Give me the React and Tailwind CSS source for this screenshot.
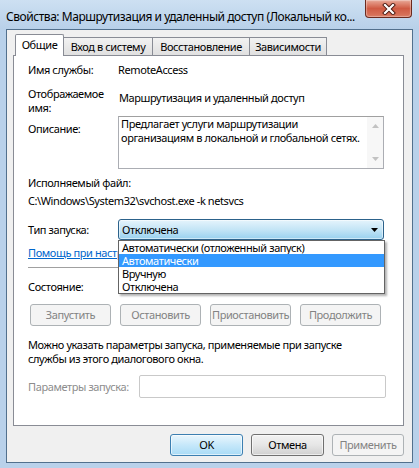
export default function App() {
  return (
    <div className="w-[419px] h-[468px] bg-[#b9d1ea] flex flex-col font-['Noto_Sans',sans-serif] text-[11px] leading-[14px] text-black tracking-[-0.4px] overflow-hidden">
      {/* title bar */}
      <div className="h-[29px] shrink-0 relative bg-gradient-to-b from-[#cde0f2] to-[#b8d0e9]">
        <div className="pl-[6px] pt-[10px] text-[12px] leading-[14px] tracking-[-0.45px] whitespace-nowrap">
          Свойства: Маршрутизация и удаленный доступ (Локальный ко...
        </div>
        <div className="absolute top-0 right-[7px] w-[47px] h-[18px] rounded-b-[4px] border border-t-0 border-[#6b2a1e] bg-gradient-to-b from-[#e8a897] via-[#cf5a43] to-[#d9785f] flex items-center justify-center shadow-[inset_0_0_1px_1px_rgba(255,255,255,0.35)]">
          <svg width="14" height="12" viewBox="0 0 14 12">
            <path d="M3 2 L11 10 M11 2 L3 10" stroke="#4a1810" strokeWidth="4" strokeLinecap="square" />
            <path d="M3 2 L11 10 M11 2 L3 10" stroke="#ffffff" strokeWidth="2.2" strokeLinecap="square" />
          </svg>
        </div>
      </div>

      {/* client area */}
      <div className="ml-[6px] w-[407px] h-[434px] shrink-0 border border-[#52708d] bg-[#f0f0f0] flex flex-col pl-[6px]">
        {/* tabs */}
        <div className="flex items-end h-[22px] mt-[4px] -mb-[1px] pl-[2px] relative z-10">
          <div className="w-[49px] h-[22px] bg-white border border-b-0 border-[#898c95] rounded-t-[2px] flex items-center justify-center pb-[1px]">
            Общие
          </div>
          <div className="w-[90px] h-[18px] mb-[1px] -ml-[1px] border border-b-0 border-[#898c95] bg-gradient-to-b from-[#f2f2f2] to-[#e0e0e0] flex items-center justify-center">
            Вход в систему
          </div>
          <div className="w-[98px] h-[18px] mb-[1px] -ml-[1px] border border-b-0 border-[#898c95] bg-gradient-to-b from-[#f2f2f2] to-[#e0e0e0] flex items-center justify-center">
            Восстановление
          </div>
          <div className="w-[78px] h-[18px] mb-[1px] -ml-[1px] border border-b-0 border-[#898c95] bg-gradient-to-b from-[#f2f2f2] to-[#e0e0e0] flex items-center justify-center">
            Зависимости
          </div>
        </div>

        {/* panel */}
        <div className="w-[391px] h-[371px] shrink-0 border border-[#898c95] bg-white pl-[14px] flex flex-col">
          <div className="flex mt-[7px] h-[14px]">
            <div className="w-[90px]">Имя службы:</div>
            <div>RemoteAccess</div>
          </div>

          <div className="flex mt-[10px] h-[28px]">
            <div className="w-[90px]">Отображаемое<br />имя:</div>
            <div className="pt-[4px] pl-[1px]">Маршрутизация и удаленный доступ</div>
          </div>

          <div className="flex mt-[1px] h-[53px]">
            <div className="w-[90px] pt-[6px]">Описание:</div>
            <div className="w-[266px] h-[53px] border border-[#abadb3] border-t-[#a0a0a0] flex">
              <div className="flex-1 pl-[2px] whitespace-nowrap">
                Предлагает услуги маршрутизации<br />организациям в локальной и глобальной сетях.
              </div>
              <div className="w-[16px] bg-[#f7f7f7] flex flex-col items-center justify-between py-[7px]">
                <svg width="7" height="4" viewBox="0 0 7 4"><path d="M0 4 L3.5 0 L7 4 Z" fill="#c2c2c2" /></svg>
                <svg width="7" height="4" viewBox="0 0 7 4"><path d="M0 0 L3.5 4 L7 0 Z" fill="#c2c2c2" /></svg>
              </div>
            </div>
          </div>

          <div className="mt-[7px] h-[14px]">Исполняемый файл:</div>
          <div className="mt-[4px] h-[14px] whitespace-nowrap">C:\Windows\System32\svchost.exe -k netsvcs</div>

          <div className="flex items-center mt-[11px] h-[21px] relative z-20">
            <div className="w-[90px]">Тип запуска:</div>
            <div className="w-[266px] h-[21px] rounded-[3px] border border-[#2c628b] bg-gradient-to-b from-[#e5f4fc] via-[#c4e5f6] to-[#98d1ef] flex items-center pl-[3px] pr-[5px] shadow-[inset_0_0_0_1px_rgba(255,255,255,0.5)]">
              <span className="flex-1">Отключена</span>
              <svg width="7" height="4" viewBox="0 0 7 4"><path d="M0 0 L7 0 L3.5 4 Z" fill="#000" /></svg>
            </div>
            {/* dropdown list */}
            <div className="absolute left-[90px] top-[21px] w-[267px] h-[54px] bg-white border border-[#646464] shadow-[2px_2px_2px_rgba(0,0,0,0.3)] flex flex-col">
              <div className="h-[13px] leading-[13px] pl-[3px] whitespace-nowrap">Автоматически (отложенный запуск)</div>
              <div className="h-[13px] leading-[13px] pl-[3px] bg-[#3399ff] text-white">Автоматически</div>
              <div className="h-[13px] leading-[13px] pl-[3px]">Вручную</div>
              <div className="h-[13px] leading-[13px] pl-[3px]">Отключена</div>
            </div>
          </div>

          <div className="mt-[6px] h-[14px] w-[90px] overflow-hidden text-[#0066cc] underline whitespace-nowrap">Помощь при настройке параметров запуска службы.</div>
          <div className="mt-[7px] h-[1px] w-[356px] bg-[#a0a0a0]"></div>

          <div className="mt-[12px] h-[14px]">Состояние:</div>

          <div className="flex gap-[9px] mt-[10px] ml-[2px] h-[22px]">
            {["Запустить", "Остановить", "Приостановить", "Продолжить"].map((t) => (
              <div key={t} className="w-[81px] h-[22px] rounded-[3px] border border-[#adb2b5] bg-[#f4f4f4] text-[#838383] flex items-center justify-center">
                {t}
              </div>
            ))}
          </div>

          <div className="mt-[12px]">
            Можно указать параметры запуска, применяемые при запуске<br />службы из этого диалогового окна.
          </div>

          <div className="flex items-center mt-[9px] h-[23px]">
            <div className="w-[111px] text-[#8d8d8d]">Параметры запуска:</div>
            <div className="w-[247px] h-[23px] rounded-[2px] border border-[#c9c9c9] bg-white"></div>
          </div>
        </div>

        {/* bottom buttons */}
        <div className="flex justify-end gap-[8px] w-[391px] mt-[8px]">
          <div className="w-[73px] h-[22px] rounded-[3px] border border-[#3c7fb1] bg-gradient-to-b from-[#eaf6fd] via-[#c6e8fa] to-[#a9dbf6] flex items-center justify-center shadow-[inset_0_0_0_1px_rgba(255,255,255,0.6)]">
            OK
          </div>
          <div className="w-[73px] h-[22px] rounded-[3px] border border-[#707070] bg-gradient-to-b from-[#f2f2f2] via-[#e6e6e6] to-[#d0d0d0] flex items-center justify-center shadow-[inset_0_0_0_1px_rgba(255,255,255,0.6)]">
            Отмена
          </div>
          <div className="w-[72px] h-[22px] rounded-[3px] border border-[#adb2b5] bg-[#f4f4f4] text-[#838383] flex items-center justify-center">
            Применить
          </div>
        </div>
      </div>
    </div>
  );
}
